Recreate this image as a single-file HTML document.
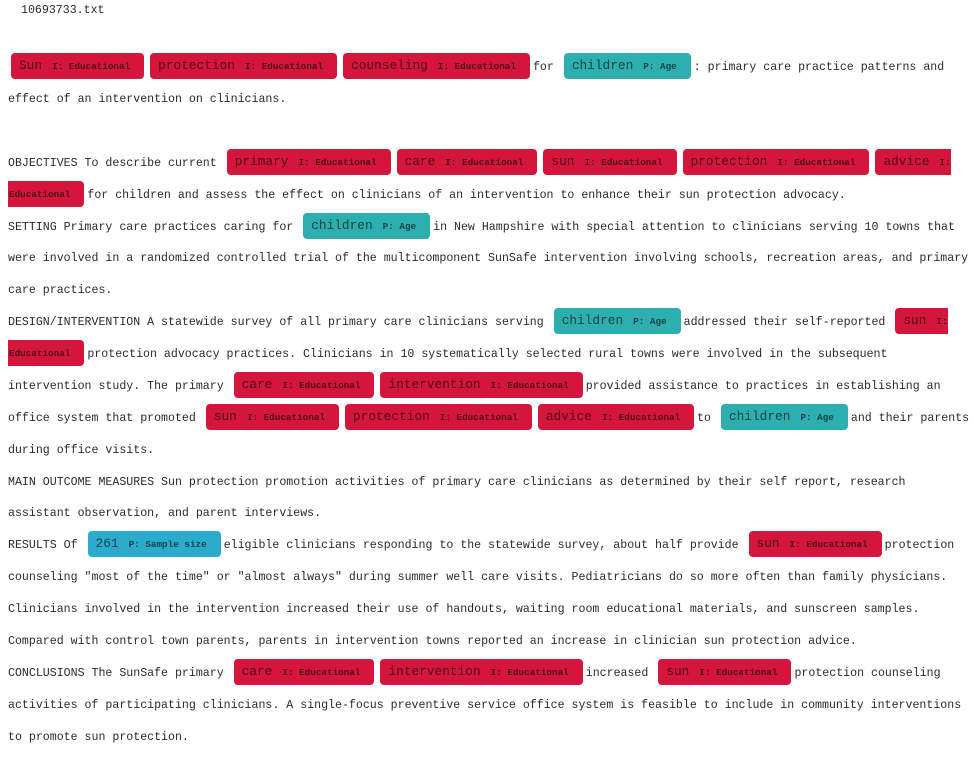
<!DOCTYPE html>
<html><head><meta charset="utf-8">
<style>
html,body{margin:0;padding:0;background:#fff;width:974px;height:758px;overflow:hidden;}
body{font-family:"Liberation Mono",monospace;font-size:11.6px;color:#2a2a2a;position:relative;}
.l{position:absolute;left:8px;height:32px;line-height:32px;white-space:pre;margin-top:2px;}
.m{display:inline-block;height:26px;line-height:26px;vertical-align:middle;border-radius:4px;margin:0 3px;padding:0 14px 0 8px;font-size:12.8px;color:rgba(0,0,0,.62);position:relative;top:-1px}
.m b{font-size:9.3px;font-weight:bold;margin-left:10px;}
.r{background:#d4163c;}
.t{background:#2eafaf;}
.s{background:#2caccc;}
.cl{border-radius:4px 0 0 4px;padding-right:0;margin-right:0}
.cr{border-radius:0 4px 4px 0;padding-left:1px;margin-left:0}
.cr b{margin-left:0}
</style></head><body>
<div class="l" style="top:-7px;left:21px">10693733.txt</div>
<div class="l" style="top:50px"><span class="m r">Sun<b>I: Educational</b></span><span class="m r">protection<b>I: Educational</b></span><span class="m r">counseling<b>I: Educational</b></span>for <span class="m t">children<b>P: Age</b></span>: primary care practice patterns and</div>
<div class="l" style="top:82px">effect of an intervention on clinicians.</div>
<div class="l" style="top:146px">OBJECTIVES To describe current <span class="m r">primary<b>I: Educational</b></span><span class="m r">care<b>I: Educational</b></span><span class="m r">sun<b>I: Educational</b></span><span class="m r">protection<b>I: Educational</b></span><span class="m r cl">advice<b>I:</b></span></div>
<div class="l" style="top:178px"><span class="m r cr"><b>Educational</b></span>for children and assess the effect on clinicians of an intervention to enhance their sun protection advocacy.</div>
<div class="l" style="top:210px">SETTING Primary care practices caring for <span class="m t">children<b>P: Age</b></span>in New Hampshire with special attention to clinicians serving 10 towns that</div>
<div class="l" style="top:241px">were involved in a randomized controlled trial of the multicomponent SunSafe intervention involving schools, recreation areas, and primary</div>
<div class="l" style="top:273px">care practices.</div>
<div class="l" style="top:305px">DESIGN/INTERVENTION A statewide survey of all primary care clinicians serving <span class="m t">children<b>P: Age</b></span>addressed their self-reported <span class="m r cl">sun<b>I:</b></span></div>
<div class="l" style="top:337px"><span class="m r cr"><b>Educational</b></span>protection advocacy practices. Clinicians in 10 systematically selected rural towns were involved in the subsequent</div>
<div class="l" style="top:369px">intervention study. The primary <span class="m r">care<b>I: Educational</b></span><span class="m r">intervention<b>I: Educational</b></span>provided assistance to practices in establishing an</div>
<div class="l" style="top:401px">office system that promoted <span class="m r">sun<b>I: Educational</b></span><span class="m r">protection<b>I: Educational</b></span><span class="m r">advice<b>I: Educational</b></span>to <span class="m t">children<b>P: Age</b></span>and their parents</div>
<div class="l" style="top:433px">during office visits.</div>
<div class="l" style="top:465px">MAIN OUTCOME MEASURES Sun protection promotion activities of primary care clinicians as determined by their self report, research</div>
<div class="l" style="top:496px">assistant observation, and parent interviews.</div>
<div class="l" style="top:528px">RESULTS Of <span class="m s">261<b>P: Sample size</b></span>eligible clinicians responding to the statewide survey, about half provide <span class="m r">sun<b>I: Educational</b></span>protection</div>
<div class="l" style="top:560px">counseling "most of the time" or "almost always" during summer well care visits. Pediatricians do so more often than family physicians.</div>
<div class="l" style="top:592px">Clinicians involved in the intervention increased their use of handouts, waiting room educational materials, and sunscreen samples.</div>
<div class="l" style="top:624px">Compared with control town parents, parents in intervention towns reported an increase in clinician sun protection advice.</div>
<div class="l" style="top:656px">CONCLUSIONS The SunSafe primary <span class="m r">care<b>I: Educational</b></span><span class="m r">intervention<b>I: Educational</b></span>increased <span class="m r">sun<b>I: Educational</b></span>protection counseling</div>
<div class="l" style="top:688px">activities of participating clinicians. A single-focus preventive service office system is feasible to include in community interventions</div>
<div class="l" style="top:720px">to promote sun protection.</div>
</body></html>
